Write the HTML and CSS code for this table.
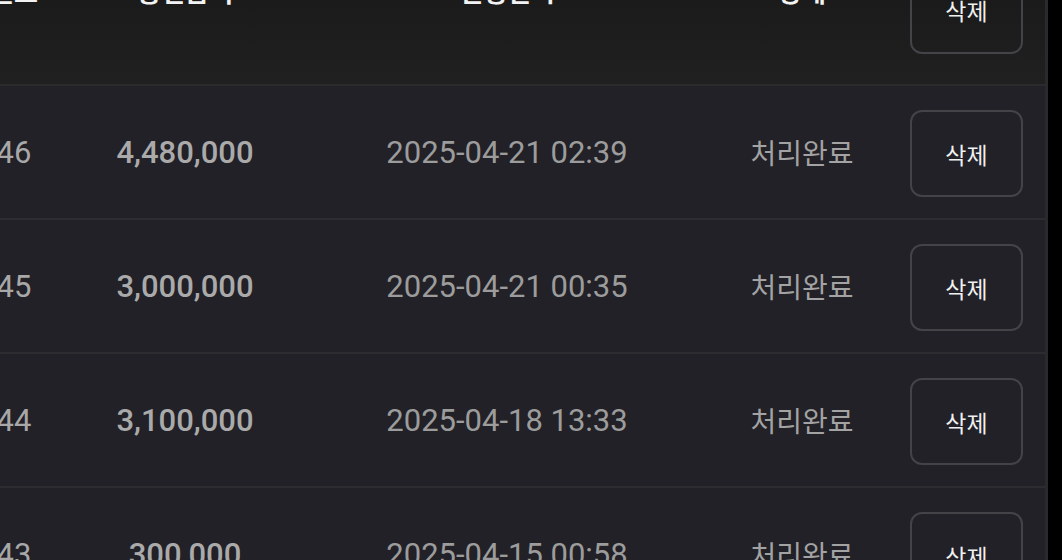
FILE: index.html
```html
<!DOCTYPE html>
<html lang="ko">
<head>
    <meta charset="UTF-8">
    <meta name="viewport" content="width=device-width, initial-scale=1.0">
    <title>충전 신청 내역</title>
    <link rel="stylesheet" href="styles.css">
</head>
<body>
    <div class="panel">
        <div class="list">
            <div class="row head">
                <div class="cell label">번호</div>
                <div class="cell label">충전금액</div>
                <div class="cell label">신청일시</div>
                <div class="cell label">상태</div>
                <div class="cell action"><button class="del">삭제</button></div>
            </div>
            <div class="row">
                <div class="cell num">46</div>
                <div class="cell amount">4,480,000</div>
                <div class="cell date">2025-04-21 02:39</div>
                <div class="cell status">처리완료</div>
                <div class="cell action"><button class="del">삭제</button></div>
            </div>
            <div class="row">
                <div class="cell num">45</div>
                <div class="cell amount">3,000,000</div>
                <div class="cell date">2025-04-21 00:35</div>
                <div class="cell status">처리완료</div>
                <div class="cell action"><button class="del">삭제</button></div>
            </div>
            <div class="row">
                <div class="cell num">44</div>
                <div class="cell amount">3,100,000</div>
                <div class="cell date">2025-04-18 13:33</div>
                <div class="cell status">처리완료</div>
                <div class="cell action"><button class="del">삭제</button></div>
            </div>
            <div class="row">
                <div class="cell num">43</div>
                <div class="cell amount">300,000</div>
                <div class="cell date">2025-04-15 00:58</div>
                <div class="cell status">처리완료</div>
                <div class="cell action"><button class="del">삭제</button></div>
            </div>
        </div>
    </div>
</body>
</html>
```

FILE: styles.css
```css
body {
    margin: 0;
    background-color: #000;
    font-family: Roboto, "Noto Sans CJK KR", sans-serif;
}
.panel {
    width: 1045px;
    height: 560px;
    overflow: hidden;
    background-color: #222127;
    border-right: 3px solid #2a292e;
}
.list {
    margin: -56px 0 0 -72px;
}
.row {
    display: grid;
    grid-template-columns: 172px 170px 474px 116px 1fr;
    align-items: center;
    height: 134px;
    box-sizing: border-box;
    border-bottom: 2px solid #2d2c31;
}
.row.head {
    height: 142px;
    background: linear-gradient(#171717, #202020);
    border-bottom-color: #2b2b2d;
}
.cell {
    text-align: center;
    white-space: nowrap;
}
.label {
    align-self: start;
    padding-top: 32px;
    font-family: "Noto Sans CJK KR", sans-serif;
    font-size: 26px;
    font-weight: 700;
    line-height: 30px;
    color: #f2f2f2;
}
.num {
    font-size: 31px;
    color: #a8a8a8;
}
.amount {
    font-size: 31px;
    font-weight: 500;
    color: #aaaaaa;
}
.date {
    font-size: 31px;
    color: #9c9c9c;
}
.status {
    font-family: "Noto Sans CJK KR", sans-serif;
    font-size: 28px;
    color: #a3a3a3;
}
.action {
    display: flex;
    justify-content: flex-end;
    padding-right: 22px;
}
.del {
    width: 113px;
    height: 87px;
    margin-top: 3px;
    background-color: transparent;
    border: 2px solid #444348;
    border-radius: 12px;
    color: #f0f0f0;
    font-family: "Noto Sans CJK KR", sans-serif;
    font-size: 23px;
}
.head .del {
    margin-top: -8px;
}
```
